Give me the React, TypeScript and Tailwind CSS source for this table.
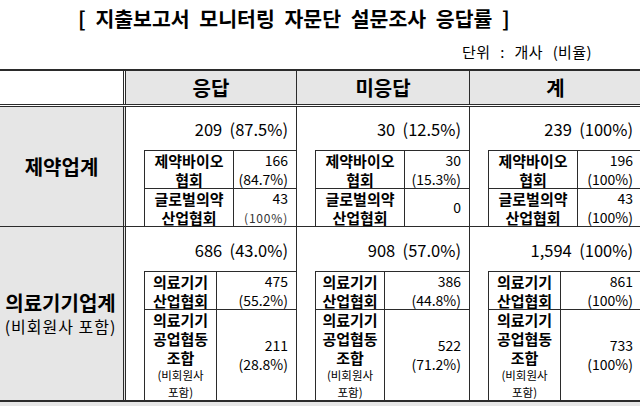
import React from "react";

type Item = { name: string[]; note?: boolean; val: string[]; small?: boolean };
type ColData = { total: string; items: Item[] };

const row1: ColData[] = [
  {
    total: "209  (87.5%)",
    items: [
      { name: ["제약바이오", "협회"], val: ["166", "(84.7%)"] },
      { name: ["글로벌의약", "산업협회"], val: ["43", "(100%)"], small: true },
    ],
  },
  {
    total: "30  (12.5%)",
    items: [
      { name: ["제약바이오", "협회"], val: ["30", "(15.3%)"] },
      { name: ["글로벌의약", "산업협회"], val: ["0"] },
    ],
  },
  {
    total: "239  (100%)",
    items: [
      { name: ["제약바이오", "협회"], val: ["196", "(100%)"] },
      { name: ["글로벌의약", "산업협회"], val: ["43", "(100%)"] },
    ],
  },
];

const row2: ColData[] = [
  {
    total: "686  (43.0%)",
    items: [
      { name: ["의료기기", "산업협회"], val: ["475", "(55.2%)"] },
      { name: ["의료기기", "공업협동", "조합"], note: true, val: ["211", "(28.8%)"] },
    ],
  },
  {
    total: "908  (57.0%)",
    items: [
      { name: ["의료기기", "산업협회"], val: ["386", "(44.8%)"] },
      { name: ["의료기기", "공업협동", "조합"], note: true, val: ["522", "(71.2%)"] },
    ],
  },
  {
    total: "1,594  (100%)",
    items: [
      { name: ["의료기기", "산업협회"], val: ["861", "(100%)"] },
      { name: ["의료기기", "공업협동", "조합"], note: true, val: ["733", "(100%)"] },
    ],
  },
];

const colWidths = ["w-[171px]", "w-[173px]", "w-[172px]"];
const row2NameW = ["w-[72px]", "w-[69px]", "w-[72px]"];

function NameCell({ item, width, tall }: { item: Item; width: string; tall: boolean }) {
  return (
    <div
      className={`${width} ${tall ? "h-[90px]" : "h-[37px]"} shrink-0 border-r border-[#2b2b2b] flex flex-col items-center justify-center text-[15px] font-bold leading-[19px] whitespace-nowrap`}
    >
      {item.name.map((n) => (
        <div key={n}>{n}</div>
      ))}
      {item.note && (
        <>
          <div className="text-[11.5px] font-normal leading-[17px]">(비회원사</div>
          <div className="text-[11.5px] font-normal leading-[17px]">포함)</div>
        </>
      )}
    </div>
  );
}

function ValueCell({ item, tall }: { item: Item; tall: boolean }) {
  return (
    <div
      className={`flex-1 ${tall ? "h-[90px]" : "h-[37px]"} flex flex-col items-end justify-center pr-[8px] text-[14px] leading-[19px]`}
    >
      {item.val.map((v, i) =>
        item.small && i === 1 ? (
          <div key={v} className="text-[12px] tracking-[0.8px] text-[#333]">
            {v}
          </div>
        ) : (
          <div key={v}>{v}</div>
        )
      )}
    </div>
  );
}

function DataCell({
  data,
  width,
  nameW,
  second,
}: {
  data: ColData;
  width: string;
  nameW: string;
  second: boolean;
}) {
  return (
    <div className={`${width} shrink-0 border-r border-[#2b2b2b] flex flex-col`}>
      <div
        className={`${second ? "h-[44px]" : "h-[43px]"} flex items-center justify-end pr-[8px] pt-[2px] text-[16.5px] whitespace-pre`}
      >
        {data.total}
      </div>
      <div className="ml-[18px] border-l border-t border-[#2b2b2b] flex flex-col">
        <div className="flex">
          <NameCell item={data.items[0]} width={nameW} tall={false} />
          <ValueCell item={data.items[0]} tall={false} />
        </div>
        <div className="flex border-t border-[#2b2b2b]">
          <NameCell item={data.items[1]} width={nameW} tall={second} />
          <ValueCell item={data.items[1]} tall={second} />
        </div>
      </div>
    </div>
  );
}

export default function App() {
  return (
    <div className="w-[640px] h-[406px] overflow-hidden bg-white text-black font-['Noto_Sans_CJK_KR',sans-serif]">
      <div className="h-[34px] flex items-center pl-[78px] pt-[2px] text-[20.5px] font-bold whitespace-pre leading-none [word-spacing:5px]">
        {"[ 지출보고서 모니터링 자문단 설문조사 응답률 ]"}
      </div>
      <div className="h-[35px] flex items-center pl-[462px] text-[15px] whitespace-pre leading-none tracking-[0.4px] [word-spacing:6px]">
        {"단위 : 개사 (비율)"}
      </div>
      <div className="w-[700px] border-t-2 border-[#2b2b2b]">
        <div className="flex h-[36px] border-b-[3px] border-double border-[#2b2b2b]">
          <div className="w-[126px] shrink-0 border-r-[3px] border-double border-[#2b2b2b] bg-white" />
          {["응답", "미응답", "계"].map((h, i) => (
            <div
              key={h}
              className={`${colWidths[i]} shrink-0 border-r border-[#2b2b2b] bg-[#e6e6e6] flex items-center justify-center text-[20px] font-bold`}
            >
              {h}
            </div>
          ))}
          <div className="flex-1 bg-[#e6e6e6]" />
        </div>
        <div className="flex h-[120px] border-b border-[#2b2b2b]">
          <div className="w-[126px] shrink-0 border-r-[3px] border-double border-[#2b2b2b] bg-[#e6e6e6] flex items-center justify-center text-[20px] font-bold">
            제약업계
          </div>
          {row1.map((d, i) => (
            <DataCell key={i} data={d} width={colWidths[i]} nameW="w-[89px]" second={false} />
          ))}
        </div>
        <div className="flex h-[175px] border-b-2 border-[#2b2b2b]">
          <div className="w-[126px] shrink-0 border-r-[3px] border-double border-[#2b2b2b] bg-[#e6e6e6] flex flex-col items-center justify-center pr-[2px]">
            <div className="text-[20px] font-bold leading-[24px] whitespace-nowrap">
              의료기기업계
            </div>
            <div className="text-[16px] leading-[22px] tracking-[1px] whitespace-pre">{"(비회원사 포함)"}</div>
          </div>
          {row2.map((d, i) => (
            <DataCell key={i} data={d} width={colWidths[i]} nameW={row2NameW[i]} second={true} />
          ))}
        </div>
        <div className="h-[10px] bg-[#e6e6e6]" />
      </div>
    </div>
  );
}
